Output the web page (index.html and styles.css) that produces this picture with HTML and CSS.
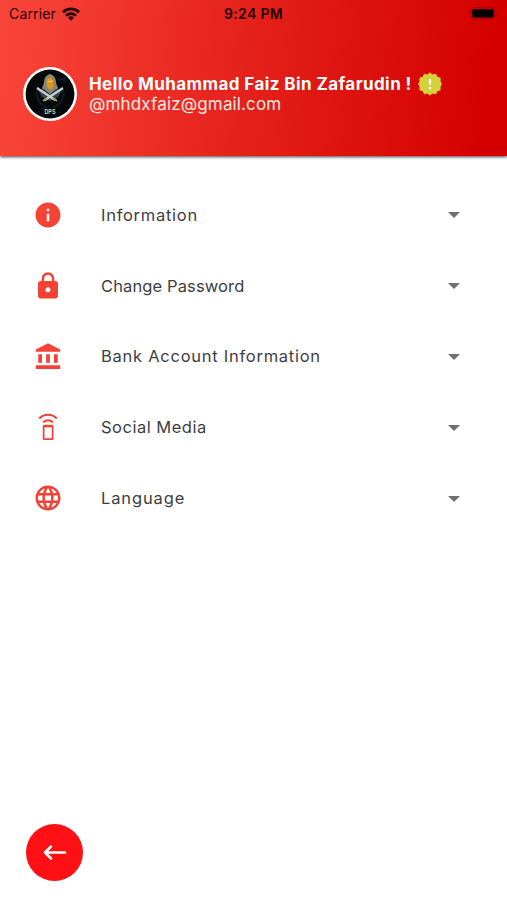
FILE: index.html
```html
<!DOCTYPE html>
<html lang="en">
<head>
<meta charset="utf-8">
<title>Profile</title>
<link rel="stylesheet" href="styles.css">
</head>
<body>
<div class="screen">
  <header class="header">
    <div class="status">
      <div class="carrier"><span>Carrier</span>
        <svg width="18" height="14" viewBox="0 0 18 14"><g fill="none" stroke="#240303" stroke-width="2.7"><path d="M1 5.2a11.5 11.5 0 0 1 16 0"/><path d="M4 8.6a7.2 7.2 0 0 1 10 0"/></g><path fill="#240303" d="M6 10.7a4.5 4.5 0 0 1 6 0L9 13.8z"/></svg>
      </div>
      <div class="time">9:24 PM</div>
      <div class="power"><svg width="29" height="13" viewBox="0 0 29 13"><rect x=".7" y=".7" width="24.5" height="11.4" rx="3" fill="none" stroke="#a80000"/><rect x="2.3" y="2.3" width="21.3" height="8.2" rx="1.2"/><path d="M26.5 4.5c2 .5 2 3.5 0 4z" fill="#8d0000"/></svg></div>
    </div>
    <div class="profile">
      <svg class="avatar" viewBox="0 0 54 54">
        <circle cx="27" cy="27" r="27" fill="#fff"/><circle cx="27" cy="27" r="24.4" fill="#050708"/>
        <path d="M16 20l-3 7 4 9 7 5M35 13l7-2-1 5M38 20l3 7-4 9-7 5" fill="none" stroke="#121c24" stroke-width="2"/>
        <path d="M27 7c-4 1-6 4-6 9l-2 5 3 4 5 3 5-3 3-4-2-5c0-5-2-8-6-9z" fill="#8a8672"/>
        <path d="M27 10l-3.2 3v6l2 3h2.6l2-3v-6z" fill="#dc951c"/><path d="M24.4 14.500h5.200" stroke="#f2bd45" stroke-width="1.5"/>
        <path d="M15 23l6-1 6 5 6-5 6 1-4 7-8 4-8-4z" fill="#35434a"/>
        <path d="M14 21l18 12M40 21L22 33" stroke="#c5ced0" stroke-width="2.2"/>
        <path d="M20 34l4-3M34 34l-4-3" stroke="#b29b58" stroke-width="2"/>
        <text x="27" y="46.5" class="avatar-text" textLength="11" lengthAdjust="spacingAndGlyphs">DPS</text>
      </svg>
      <div class="who">
        <div class="name"><span class="hello">Hello Muhammad Faiz Bin Zafarudin !</span>
          <svg class="badge" viewBox="0 0 24 24"><path fill="#d5d13b" d="M12 .5l2.7 2 3.2-.8 1.5 3 3.2 1-.1 3.3 1.3 3-1.3 3 .1 3.3-3.2 1-1.5 3-3.2-.8-2.7 2-2.7-2-3.2.8-1.5-3-3.2-1 .1-3.3-1.3-3 1.3-3-.1-3.3 3.2-1 1.5-3 3.2.8z"/><path d="M12 7v5.8M12 15v2.2" stroke="#fff" stroke-width="2.2"/></svg>
        </div>
        <div class="email">@mhdxfaiz@gmail.com</div>
      </div>
    </div>
  </header>
  <main class="menu">
    <div class="row"><svg class="icon" viewBox="0 0 24 24"><path d="M12 2C6.48 2 2 6.48 2 12s4.48 10 10 10 10-4.48 10-10S17.52 2 12 2zm1 15h-2v-6h2v6zm0-8h-2V7h2v2z"/></svg><span class="label information">Information</span><svg class="caret" viewBox="0 0 12 6"><path d="M0 0h12L6 6z"/></svg></div>
    <div class="row"><svg class="icon" viewBox="0 0 24 24"><path d="M18 8h-1V6c0-2.76-2.24-5-5-5S7 3.24 7 6v2H6c-1.1 0-2 .9-2 2v10c0 1.1.9 2 2 2h12c1.1 0 2-.9 2-2V10c0-1.1-.9-2-2-2zm-6 9c-1.1 0-2-.9-2-2s.9-2 2-2 2 .9 2 2-.9 2-2 2zm3.1-9H8.9V6c0-1.71 1.39-3.1 3.1-3.1s3.1 1.39 3.1 3.1v2z"/></svg><span class="label password">Change Password</span><svg class="caret" viewBox="0 0 12 6"><path d="M0 0h12L6 6z"/></svg></div>
    <div class="row"><svg class="icon" viewBox="0 0 24 24"><path d="M4.200 10.500v6.800h3v-6.800h-3zm6.300 0v6.800h3v-6.800h-3zM2.200 22.300h19.600v-3H2.200v3zM16.800 10.500v6.800h3v-6.800h-3zM12 1.700L2.200 6.700v1.900h19.600V6.700L12 1.700z"/></svg><span class="label bank">Bank Account Information</span><svg class="caret" viewBox="0 0 12 6"><path d="M0 0h12L6 6z"/></svg></div>
    <div class="row"><svg class="icon outline" viewBox="0 0 24 24"><path d="M5 5.200a9.700 9.700 0 0 1 14 0M8.100 8.200a5.600 5.600 0 0 1 7.800 0"/><rect x="8.500" y="10.900" width="7.200" height="10.700" rx=".5" stroke-width="1.400"/><path d="M8.500 11.400h7.200" stroke-width="1.600"/></svg><span class="label social">Social Media</span><svg class="caret" viewBox="0 0 12 6"><path d="M0 0h12L6 6z"/></svg></div>
    <div class="row"><svg class="icon" viewBox="0 0 24 24"><path d="M11.990 2C6.470 2 2 6.480 2 12s4.470 10 9.990 10C17.520 22 22 17.520 22 12S17.520 2 11.990 2zm6.930 6h-2.950c-.32-1.250-.78-2.450-1.380-3.560 1.840.630 3.370 1.910 4.330 3.560zM12 4.040c.830 1.200 1.480 2.530 1.910 3.960h-3.820c.43-1.430 1.080-2.760 1.910-3.960zM4.260 14C4.100 13.360 4 12.690 4 12s.1-1.360.26-2h3.380c-.08.660-.14 1.320-.14 2s.06 1.340.14 2H4.260zm.82 2h2.950c.32 1.250.78 2.450 1.380 3.560-1.840-.63-3.370-1.900-4.330-3.560zm2.950-8H5.080c.96-1.660 2.490-2.930 4.330-3.560C8.810 5.550 8.350 6.750 8.030 8zM12 19.960c-.83-1.200-1.480-2.530-1.910-3.960h3.820c-.43 1.430-1.080 2.760-1.910 3.960zM14.340 14H9.660c-.09-.66-.16-1.320-.16-2s.07-1.350.16-2h4.680c.09.650.16 1.320.16 2s-.07 1.340-.16 2zm.25 5.560c.6-1.110 1.060-2.310 1.380-3.560h2.950c-.96 1.650-2.490 2.930-4.330 3.560zM16.360 14c.08-.66.14-1.320.14-2s-.06-1.340-.14-2h3.380c.16.640.26 1.310.26 2s-.1 1.360-.26 2h-3.380z"/></svg><span class="label language">Language</span><svg class="caret" viewBox="0 0 12 6"><path d="M0 0h12L6 6z"/></svg></div>
  </main>
  <footer class="footer">
    <button class="back" aria-label="Back"><svg width="24" height="18" viewBox="0 0 24 18"><path d="M22 8.500H2.500M8 2.500l-6 6 6 6" fill="none" stroke="#fff" stroke-width="2.500" stroke-linejoin="round" stroke-linecap="round"/></svg></button>
  </footer>
</div>
</body>
</html>
```

FILE: styles.css
```css
* { box-sizing: border-box; }
body { margin: 0; background: #fff; font-family: Inter, "Liberation Sans", sans-serif; }
svg { display: block; flex: none; }
.screen { width: 507px; height: 900px; display: flex; flex-direction: column; overflow: hidden; }
.header { height: 156px; flex: none; background: linear-gradient(95deg, #f9463a 0%, #e5211b 48%, #d40000 96%); box-shadow: 0 1px 3px rgba(0,0,0,.75); }
.status { height: 27px; display: grid; grid-template-columns: 1fr auto 1fr; align-items: center; padding: 0 8px 0 9px; color: #240303; font-size: 14px; }
.carrier { display: flex; align-items: center; gap: 6px; letter-spacing: .15px; }
.time { font-weight: 600; letter-spacing: .35px; margin-left: -1px; }
.power { justify-self: end; }
.profile { display: flex; align-items: center; padding: 39.500px 0 0 23px; gap: 12px; }
.avatar { width: 54px; height: 54px; }
.avatar-text { font: 700 8px "Liberation Sans", sans-serif; fill: #d5d0b9; text-anchor: middle; }
.who { color: #fff; white-space: nowrap; }
.name { display: flex; align-items: center; height: 22px; gap: 6px; }
.hello { font-size: 17px; font-weight: 700; width: 323px; letter-spacing: .42px; }
.badge { width: 24px; height: 24px; }
.email { height: 20px; line-height: 19px; font-size: 17px; letter-spacing: .14px; color: #ffe9e6; }
.menu { flex: 1; padding-top: 23.5px; }
.row { display: flex; align-items: center; height: 70.8px; padding: 0 47px 0 33px; }
.icon { width: 30px; height: 30px; fill: #f44336; }
.outline { fill: none; stroke: #f44336; stroke-width: 1.700; }
.label { flex: 1; margin-left: 38px; font-size: 16.5px; color: #3e3e3e; white-space: nowrap; line-height: 20px; }
.information { letter-spacing: .73px; }
.password { letter-spacing: .12px; }
.bank { letter-spacing: .74px; }
.social { letter-spacing: .5px; }
.language { letter-spacing: .87px; }
.caret { width: 12px; height: 6px; margin-top: 1px; fill: #707070; }
.footer { height: 76px; padding-left: 26px; flex: none; }
.back { display: flex; align-items: center; justify-content: center; width: 57px; height: 57px; padding: 0; border: 0; border-radius: 50%; background: #ff1015; }
```
